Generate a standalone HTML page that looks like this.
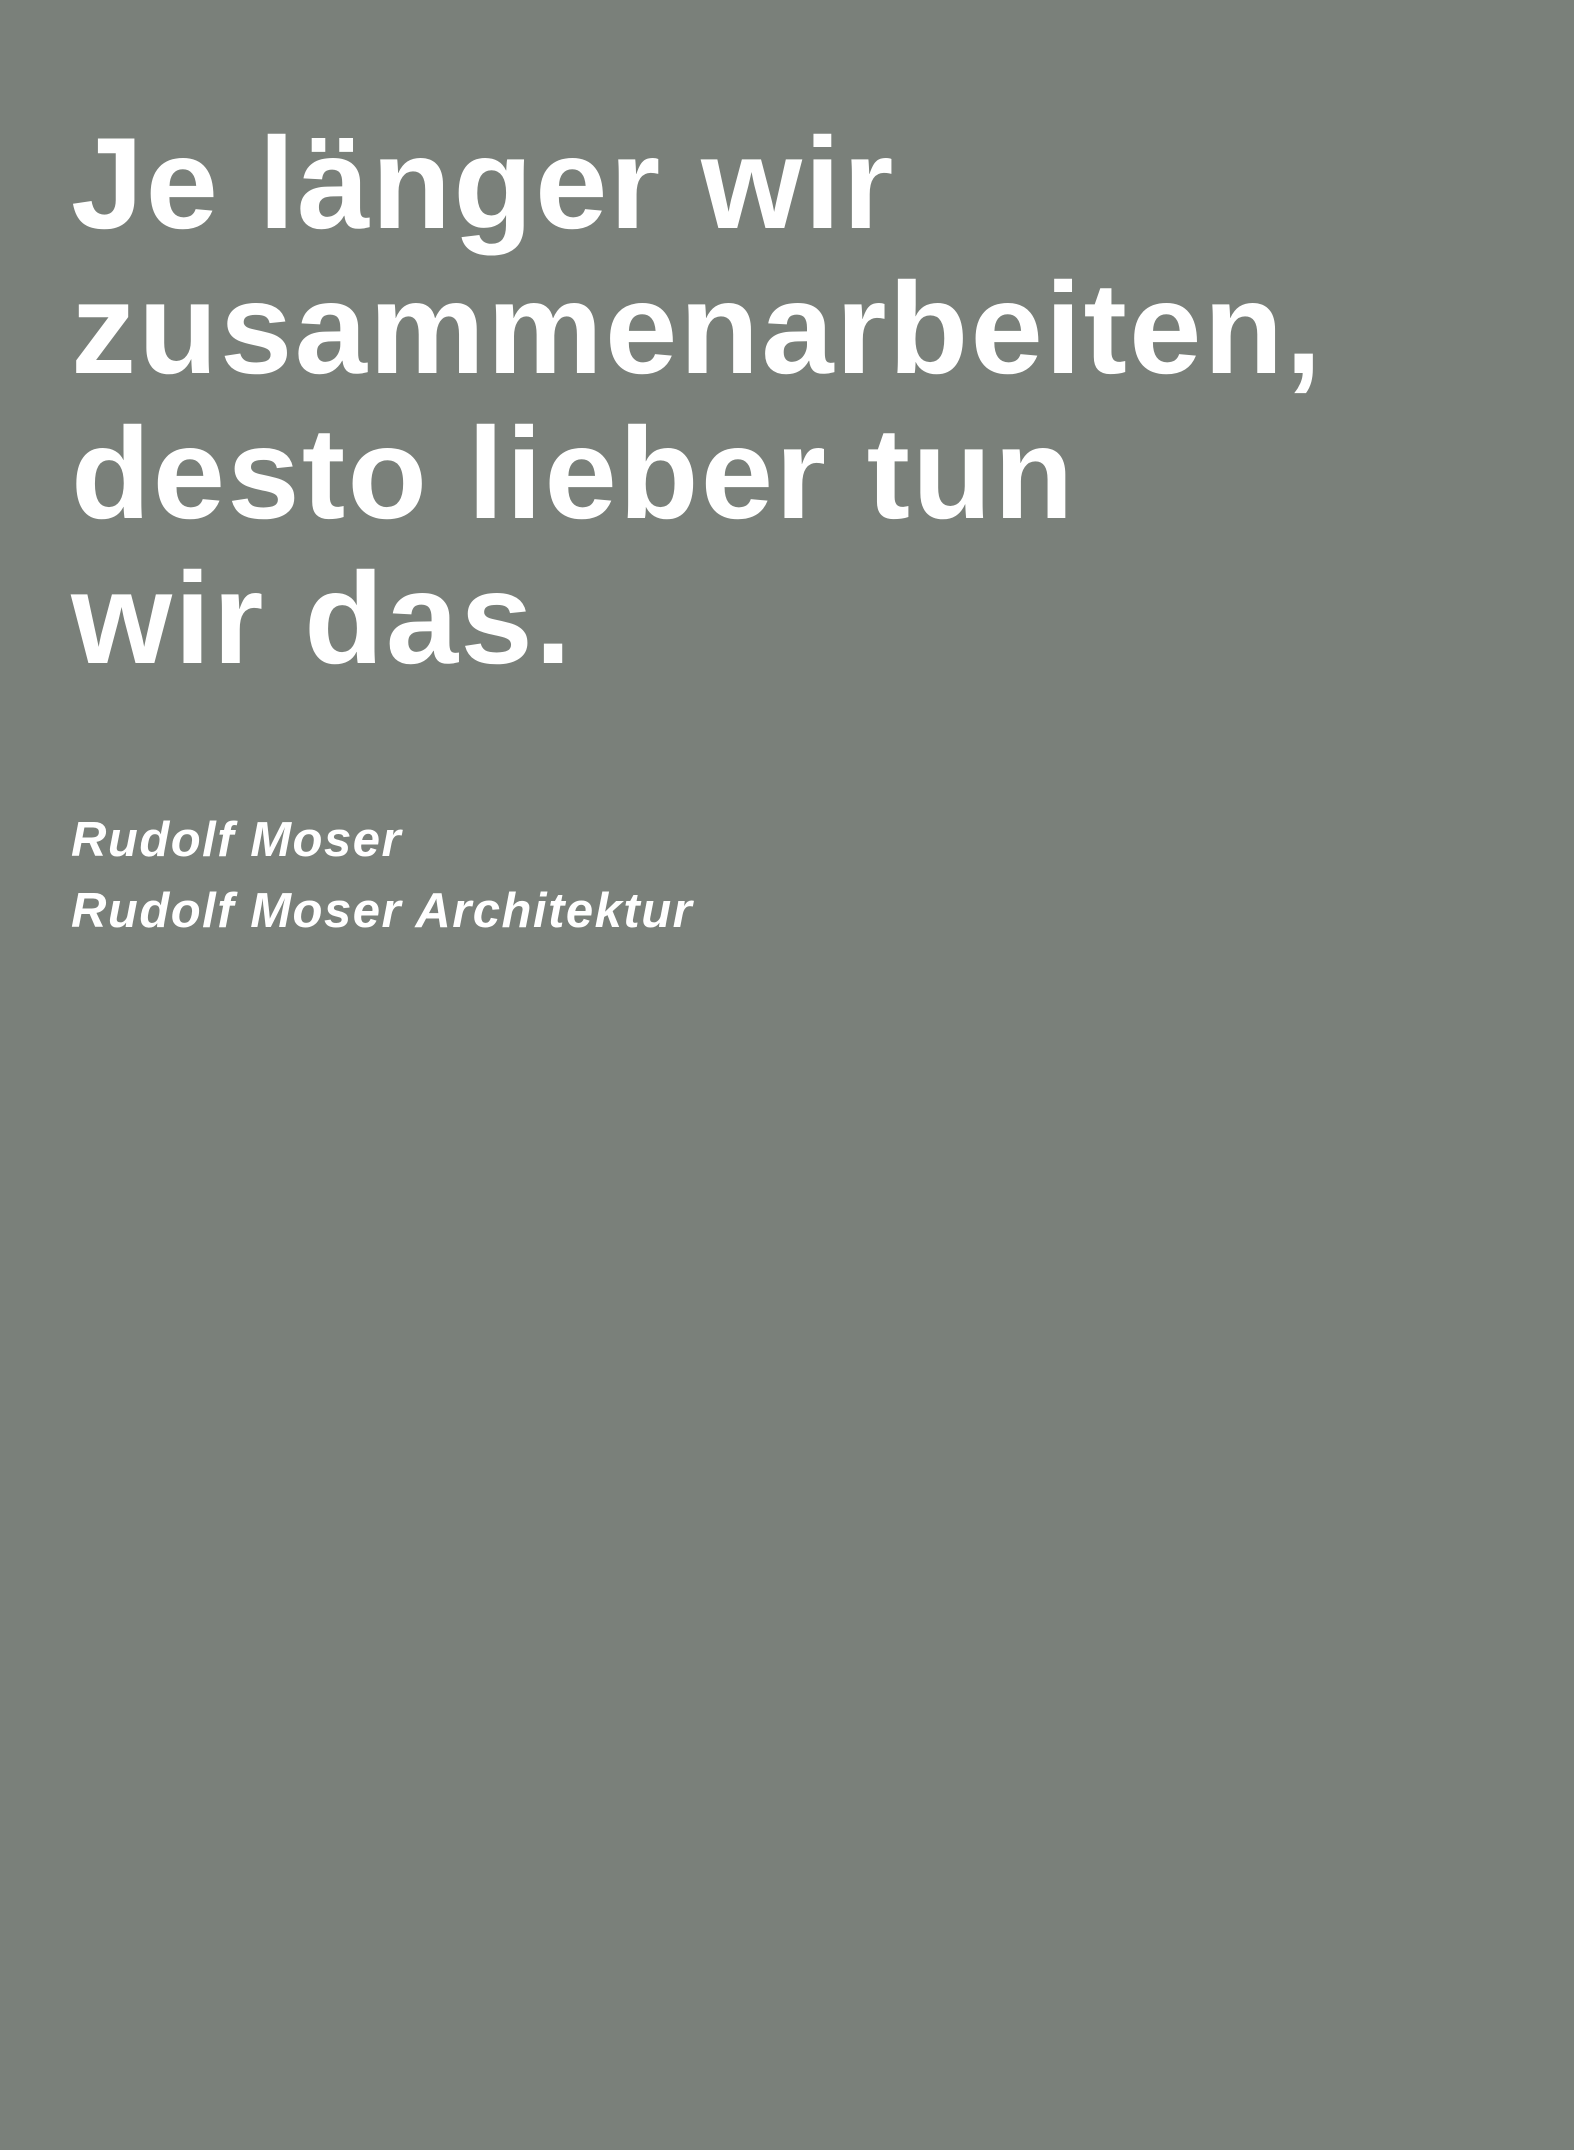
<!DOCTYPE html>
<html><head><meta charset="utf-8"><style>
html,body{margin:0;padding:0;}
body{width:1574px;height:2150px;background:#7a807a;position:relative;overflow:hidden;font-family:"Liberation Sans",Arial,sans-serif;color:#fff;}
h1{position:absolute;left:71px;top:111px;margin:0;font-size:130px;line-height:145px;font-weight:bold;letter-spacing:2.3px;}
.a{position:absolute;left:71px;top:805px;font-size:49px;line-height:71px;font-weight:bold;font-style:italic;letter-spacing:1.5px;}
</style></head><body>
<h1>Je länger wir<br>zusammenarbeiten,<br>desto lieber tun<br>wir das.</h1>
<div class="a">Rudolf Moser<br>Rudolf Moser Architektur</div>
</body></html>
